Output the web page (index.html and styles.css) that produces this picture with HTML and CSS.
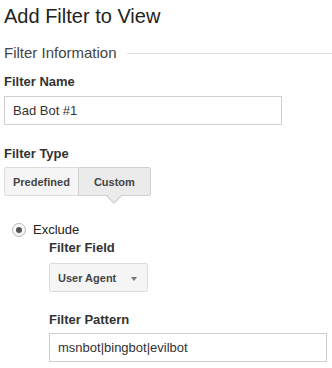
FILE: index.html
```html
<!DOCTYPE html>
<html>
<head>
<meta charset="utf-8">
<link rel="stylesheet" href="styles.css">
</head>
<body>
<div class="page">
  <h1 class="title">Add Filter to View</h1>
  <div class="section">Filter Information</div>

  <div class="label l-name">Filter Name</div>
  <input class="field f-name" type="text" value="Bad Bot #1">

  <div class="label l-type">Filter Type</div>
  <div class="toggle">
    <span class="tbtn">Predefined</span>
    <span class="tbtn active">Custom</span>
  </div>

  <div class="radio-row">
    <span class="radio"><span class="dot"></span></span>
    <span class="radio-label">Exclude</span>
  </div>

  <div class="indent">
    <div class="label l-field">Filter Field</div>
    <div class="select">
      <span>User Agent</span>
      <span class="caret"></span>
    </div>
    <div class="label l-pattern">Filter Pattern</div>
    <input class="field f-pattern" type="text" value="msnbot|bingbot|evilbot">
  </div>
</div>
</body>
</html>
```
FILE: styles.css
```css
* { box-sizing: border-box; }
html, body { margin: 0; padding: 0; background: #fff; }
body { font-family: "Liberation Sans", Arial, sans-serif; color: #333; }
.page { padding: 4px 0 0 4px; width: 332px; }

.title {
  margin: 0;
  font-size: 20px;
  line-height: 24px;
  font-weight: normal;
  color: #222;
}

.section {
  margin-top: 16px;
  display: flex;
  align-items: center;
  font-size: 15px;
  line-height: 18px;
  color: #444;
}
.section::after {
  content: "";
  flex: 1;
  height: 1px;
  margin-left: 10px;
  background: #e0e0e0;
}

.label {
  font-size: 13px;
  line-height: 16px;
  font-weight: bold;
  color: #333;
}
.l-name { margin-top: 12px; }
.l-type { margin-top: 21px; }
.l-field { margin-top: 2px; }
.l-pattern { margin-top: 20px; }

.field {
  display: block;
  width: 278px;
  height: 29px;
  margin: 6px 0 0 0;
  padding: 0 8px;
  border: 1px solid #d0d0d0;
  border-radius: 0;
  font-family: "Liberation Sans", Arial, sans-serif;
  font-size: 13px;
  color: #333;
  background: #fff;
  outline: none;
}
.f-pattern { margin-top: 5px; }

.toggle {
  margin-top: 5px;
  display: flex;
}
.tbtn {
  position: relative;
  display: flex;
  align-items: center;
  justify-content: center;
  height: 29px;
  padding: 0 8px;
  border: 1px solid #dcdcdc;
  background: #f5f5f5;
  font-size: 11px;
  font-weight: bold;
  color: #444;
}
.tbtn:first-child { border-radius: 2px 0 0 2px; }
.tbtn.active {
  margin-left: -1px;
  min-width: 73px;
  background: #ebebeb;
  border-color: #d0d0d0;
  border-radius: 0 2px 2px 0;
}
.tbtn.active::before,
.tbtn.active::after {
  content: "";
  position: absolute;
  left: 50%;
  width: 0;
  height: 0;
  border-style: solid;
  border-color: transparent;
}
.tbtn.active::before {
  top: 28px;
  margin-left: -8px;
  border-width: 8px 8px 0 8px;
  border-top-color: #d4d4d4;
}
.tbtn.active::after {
  top: 27px;
  margin-left: -7px;
  border-width: 7px 7px 0 7px;
  border-top-color: #ebebeb;
}

.radio-row {
  margin-top: 26px;
  display: flex;
  align-items: center;
  height: 16px;
  padding-left: 8px;
}
.radio {
  width: 14px;
  height: 14px;
  border-radius: 50%;
  border: 1px solid #b8b8b8;
  background: linear-gradient(#fff, #f0f0f0);
  display: flex;
  align-items: center;
  justify-content: center;
}
.dot {
  width: 6px;
  height: 6px;
  border-radius: 50%;
  background: #555;
}
.radio-label {
  margin-left: 7px;
  font-size: 13px;
  line-height: 16px;
  color: #222;
}

.indent { padding-left: 45px; }

.select {
  margin-top: 7px;
  width: 99px;
  height: 29px;
  display: flex;
  align-items: center;
  justify-content: space-between;
  padding: 0 10px 0 8px;
  border: 1px solid #dcdcdc;
  border-radius: 2px;
  background: #f5f5f5;
  font-size: 11px;
  font-weight: bold;
  color: #444;
}
.caret {
  width: 0;
  height: 0;
  border-style: solid;
  border-width: 4px 3.5px 0 3.5px;
  border-color: #777 transparent transparent transparent;
  margin-top: 2px;
}
```
